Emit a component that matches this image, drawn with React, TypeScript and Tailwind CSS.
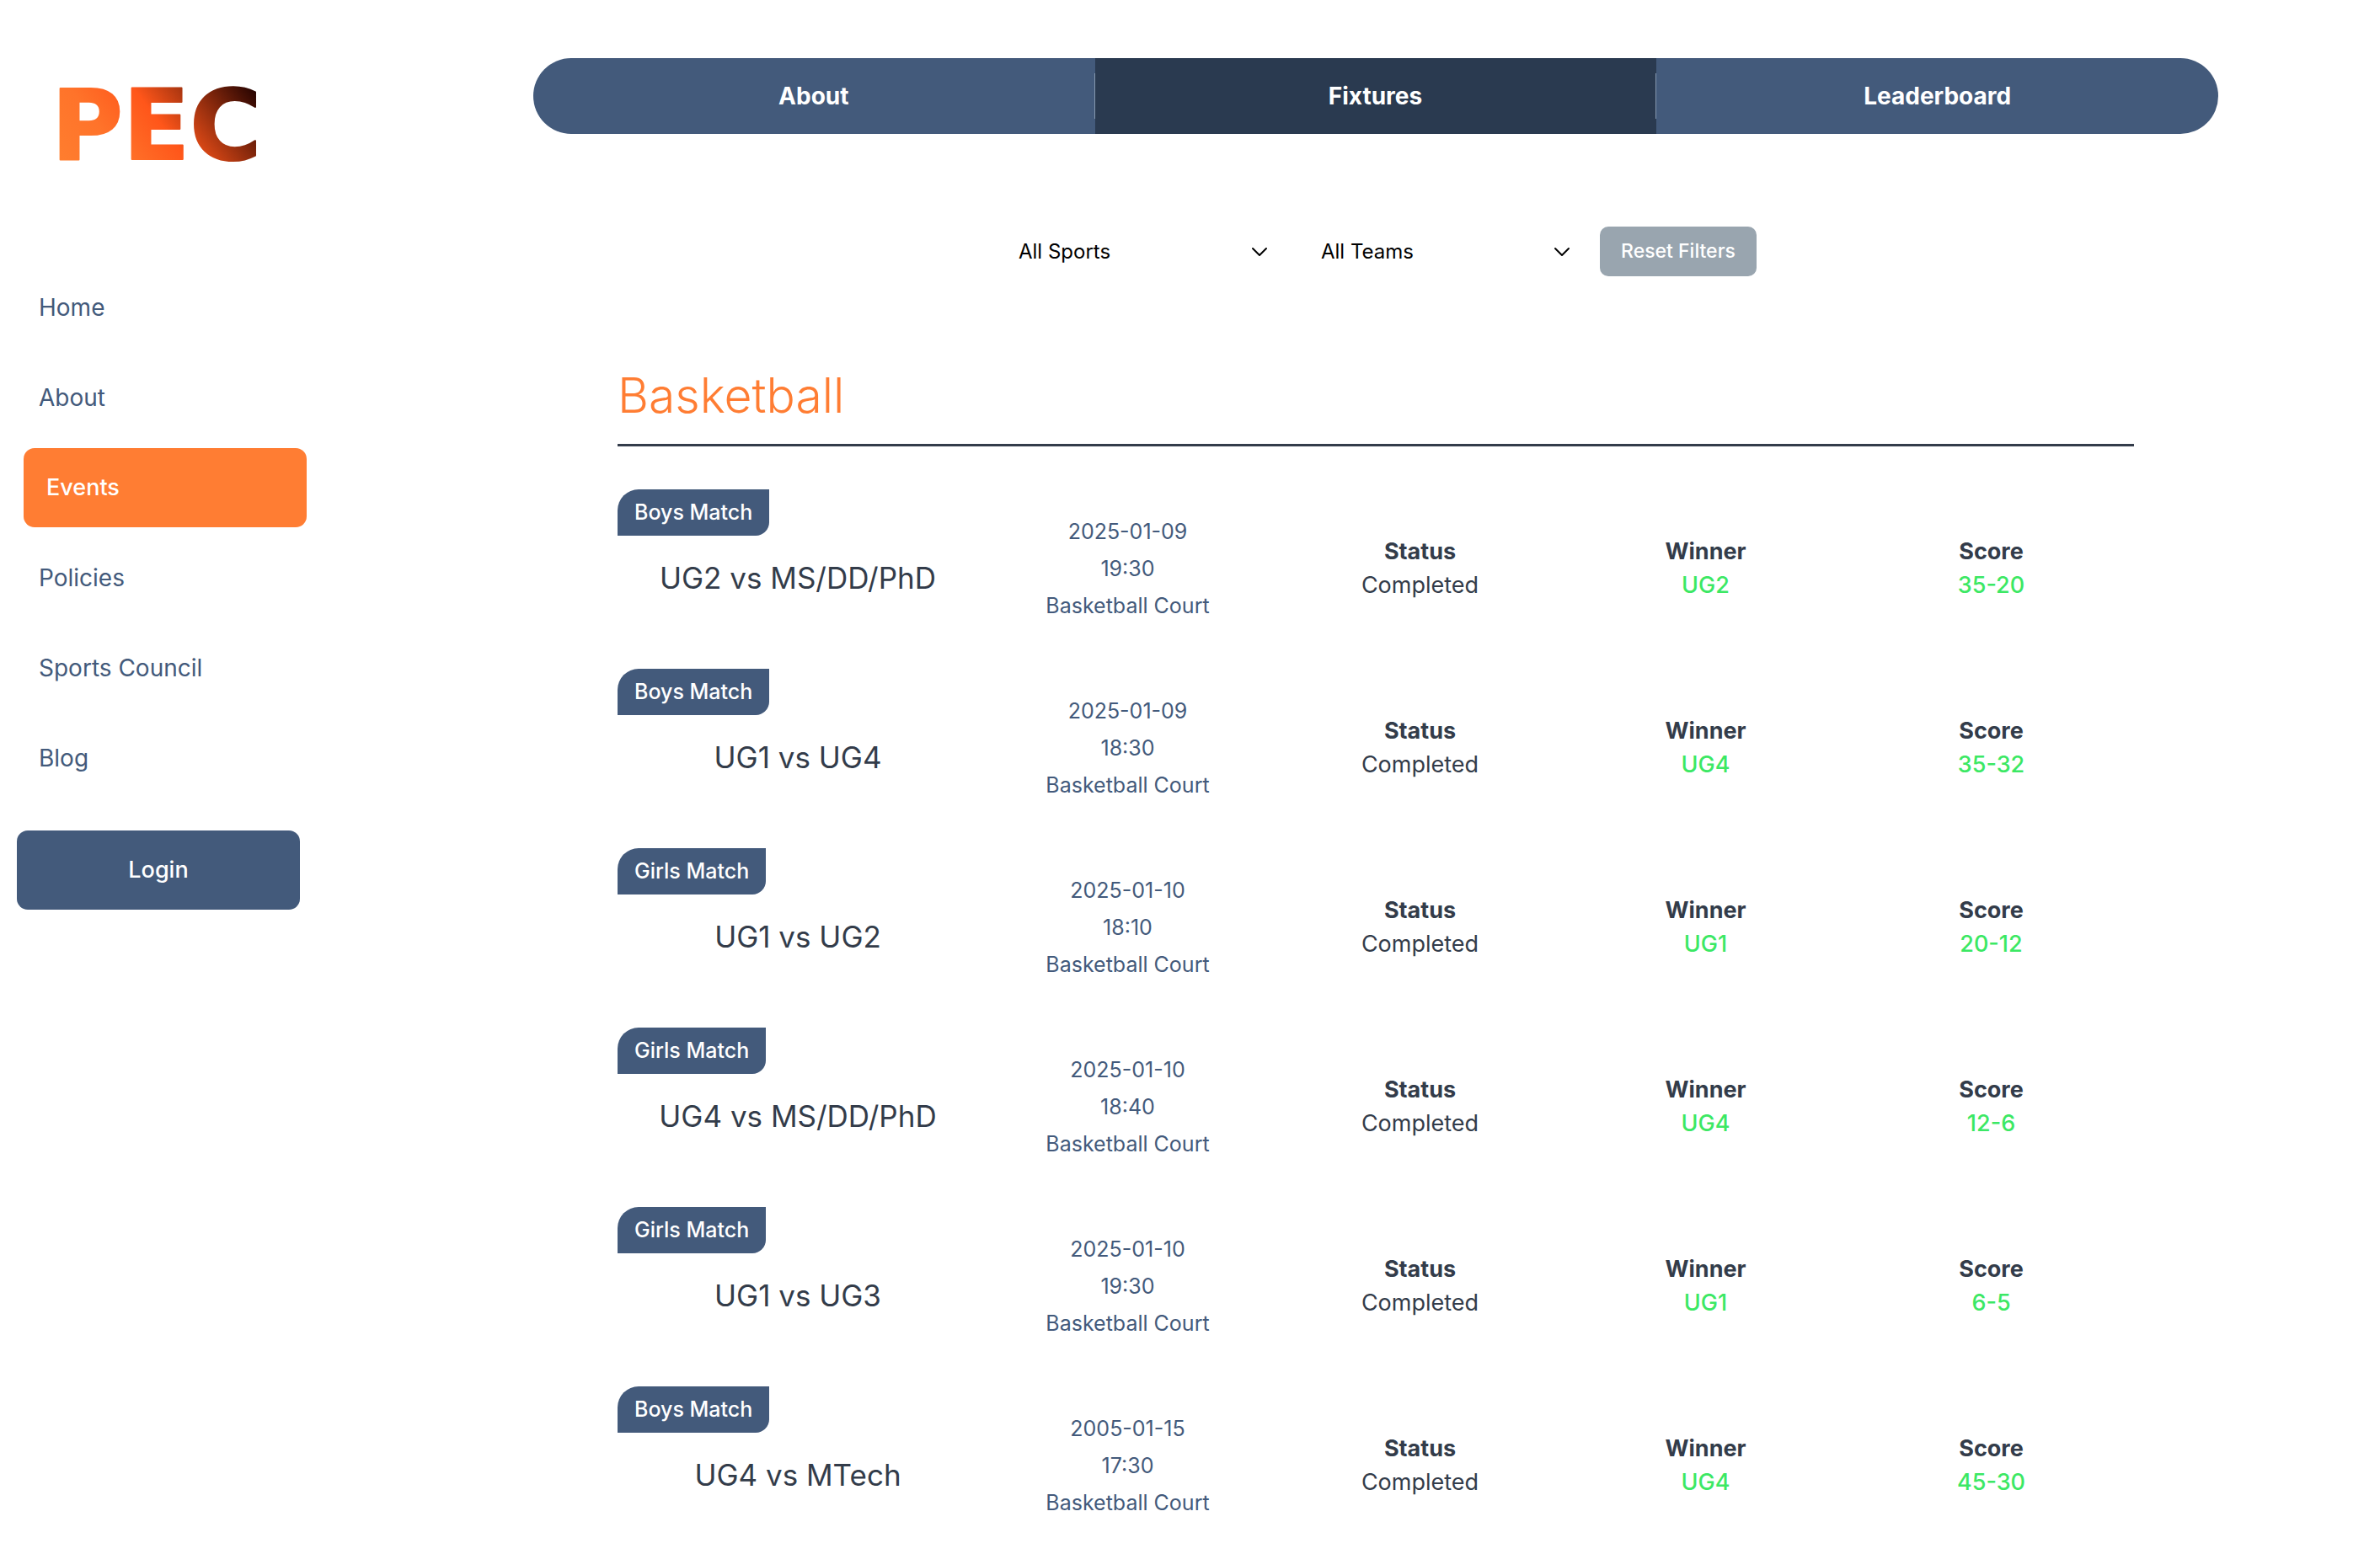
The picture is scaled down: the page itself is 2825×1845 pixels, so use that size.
import { ChevronDown } from "lucide-react";

type Match = {
  group: "Boys" | "Girls";
  title: string;
  date: string;
  time: string;
  winner: string;
  score: string;
};

const navItems = ["Home", "About", "Events", "Policies", "Sports Council", "Blog"];
const tabs = ["About", "Fixtures", "Leaderboard"];

const matches: Match[] = [
  { group: "Boys", title: "UG2 vs MS/DD/PhD", date: "2025-01-09", time: "19:30", winner: "UG2", score: "35-20" },
  { group: "Boys", title: "UG1 vs UG4", date: "2025-01-09", time: "18:30", winner: "UG4", score: "35-32" },
  { group: "Girls", title: "UG1 vs UG2", date: "2025-01-10", time: "18:10", winner: "UG1", score: "20-12" },
  { group: "Girls", title: "UG4 vs MS/DD/PhD", date: "2025-01-10", time: "18:40", winner: "UG4", score: "12-6" },
  { group: "Girls", title: "UG1 vs UG3", date: "2025-01-10", time: "19:30", winner: "UG1", score: "6-5" },
  { group: "Boys", title: "UG4 vs MTech", date: "2005-01-15", time: "17:30", winner: "UG4", score: "45-30" },
];

function Logo() {
  return (
    <a href="#home" aria-label="PEC home" className="block">
      <svg viewBox="0 0 300 140" className="h-[140px] w-[300px]">
        <defs>
          <linearGradient id="pec" gradientUnits="userSpaceOnUse" x1="40" y1="150" x2="230" y2="5">
            <stop offset="0" stopColor="#ff7d2e" />
            <stop offset="0.25" stopColor="#ff732a" />
            <stop offset="0.5" stopColor="#ff561a" />
            <stop offset="1" stopColor="#1c0000" />
          </linearGradient>
        </defs>
        <text
          x="1"
          y="114"
          fontSize="116"
          fill="url(#pec)"
          stroke="url(#pec)"
          strokeWidth="2"
          strokeLinejoin="round"
          className="font-['DejaVu_Sans',sans-serif] font-bold"
        >
          PEC
        </text>
      </svg>
    </a>
  );
}

function Sidebar() {
  return (
    <aside className="w-[441px] shrink-0 pt-[75px]">
      <div className="pl-[60px]">
        <Logo />
      </div>
      <nav className="mt-[103px] flex flex-col gap-[13px] pl-7 text-[28px]">
        {navItems.map((item) => (
          <a
            key={item}
            href={"#" + item.toLowerCase().replace(" ", "-")}
            className={
              item === "Events"
                ? "flex h-[94px] w-[336px] items-center rounded-[13px] bg-[#ff7d33] pl-[27px] text-[27px] font-medium text-white"
                : "flex h-[94px] w-[336px] items-center pl-[18px] text-[#435a7b]"
            }
          >
            {item}
          </a>
        ))}
      </nav>
      <button className="mt-[39px] ml-5 h-[94px] w-[336px] rounded-[13px] bg-[#435a7b] text-[27px] font-medium text-white">
        Login
      </button>
    </aside>
  );
}

function Tabs() {
  return (
    <nav className="grid h-[90px] grid-cols-3 overflow-hidden rounded-full bg-[#435a7b] text-[28px] font-bold text-white">
      {tabs.map((tab, i) => (
        <a
          key={tab}
          href={"#" + tab.toLowerCase()}
          className={
            tab === "Fixtures"
              ? "flex items-center justify-center bg-[#2a3a50]"
              : "flex items-center justify-center"
          }
        >
          <span className="flex-1 text-center">{tab}</span>
          {i < 2 && <span className="h-[54px] w-px bg-[#8496ad]" />}
        </a>
      ))}
    </nav>
  );
}

function Filter({ label, option }: { label: string; option: string }) {
  return (
    <div className="relative w-[341px]">
      <select
        aria-label={label}
        className="h-[59px] w-full appearance-none bg-transparent pl-7 text-[24px] text-black"
      >
        <option>{option}</option>
      </select>
      <ChevronDown
        className="pointer-events-none absolute top-[14px] right-[11px] size-8 text-black"
        strokeWidth={1.5}
      />
    </div>
  );
}

function Stat({ label, value, highlight }: { label: string; value: string; highlight?: boolean }) {
  return (
    <div className="text-center text-[27px] leading-10">
      <div className="font-bold text-[#333c4a]">{label}</div>
      <div className={highlight ? "font-medium text-[#3ce864]" : "text-[#333c4a]"}>{value}</div>
    </div>
  );
}

function MatchRow({ match }: { match: Match }) {
  return (
    <article className="grid h-[188px] grid-cols-[428fr_355fr_339fr_339fr_339fr] items-center">
      <div className="flex h-full flex-col">
        <span className="flex h-[55px] items-center self-start rounded-tl-[25px] rounded-br-2xl bg-[#435a7b] px-5 text-[25px] font-medium text-white">
          {match.group} Match
        </span>
        <h3 className="mt-6 text-center text-[35px] leading-[52px] text-[#333c4a]">{match.title}</h3>
      </div>
      <div className="text-center text-[25px] leading-11 text-[#435a7b]">
        <p>{match.date}</p>
        <p>{match.time}</p>
        <p>Basketball Court</p>
      </div>
      <Stat label="Status" value="Completed" />
      <Stat label="Winner" value={match.winner} highlight />
      <Stat label="Score" value={match.score} highlight />
    </article>
  );
}

export default function App() {
  return (
    <div className="flex min-h-screen bg-white font-['Inter',sans-serif]">
      <Sidebar />
      <main className="min-w-0 flex-1 px-48 pt-[69px]">
        <Tabs />
        <form className="mt-[110px] flex justify-center gap-[18px]">
          <Filter label="Sport" option="All Sports" />
          <Filter label="Team" option="All Teams" />
          <button
            type="button"
            className="h-[59px] w-[186px] rounded-[10px] bg-[#99a5af] text-[23px] font-medium text-white"
          >
            Reset Filters
          </button>
        </form>
        <section className="mt-[106px] px-[100px]">
          <h2 className="border-b-[3px] border-[#333c4a] pb-[21px] text-[57px] leading-[72px] font-light text-[#ff7d33]">
            Basketball
          </h2>
          <div className="mt-[51px] flex flex-col gap-[25px]">
            {matches.map((m) => (
              <MatchRow key={m.group + m.title} match={m} />
            ))}
          </div>
        </section>
      </main>
    </div>
  );
}
